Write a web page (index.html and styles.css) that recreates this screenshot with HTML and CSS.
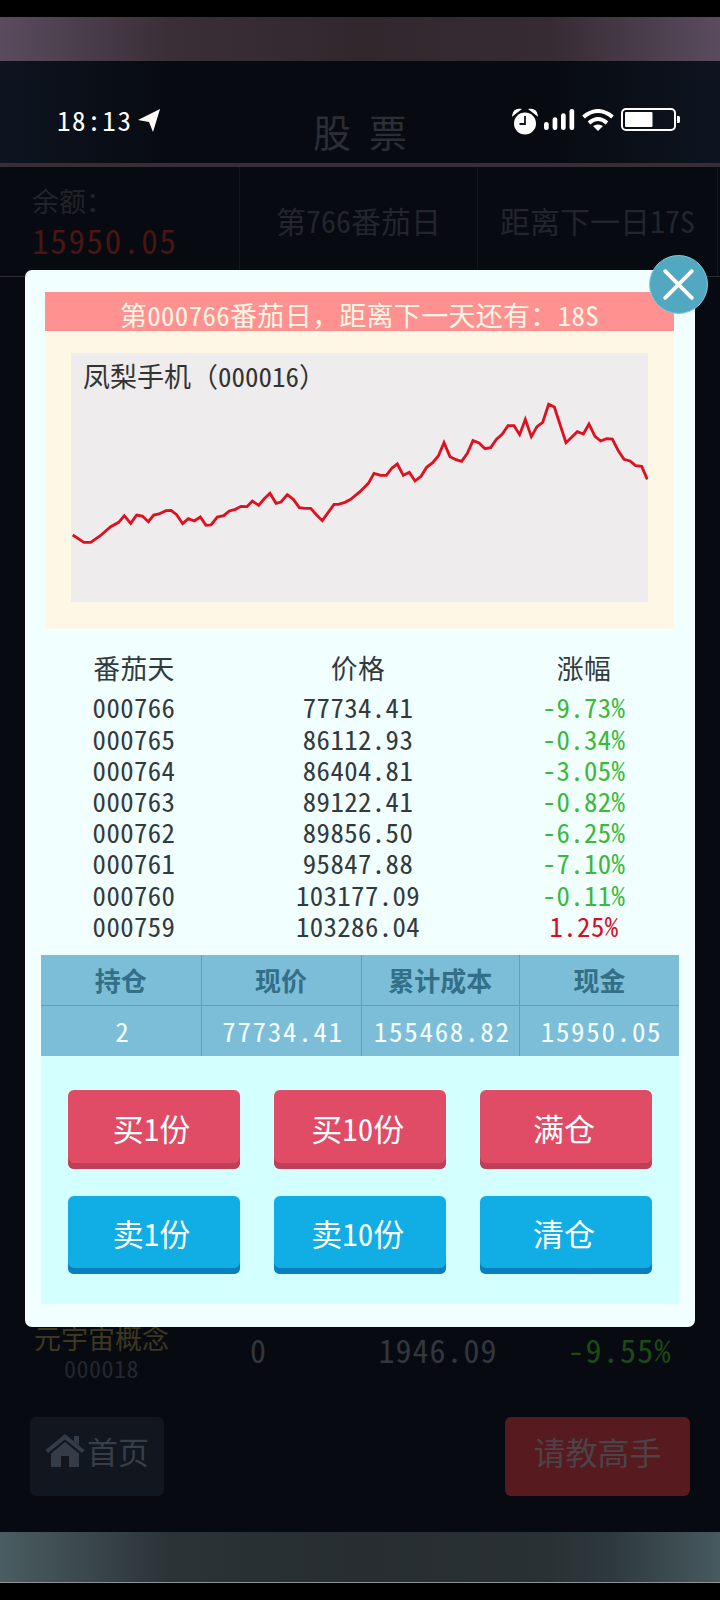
FILE: index.html
```html
<!DOCTYPE html>
<html lang="zh-CN">
<head>
<meta charset="utf-8">
<title>股票</title>
<link rel="stylesheet" href="styles.css">
</head>
<body>
<div class="page">
  <div class="edge-top"></div>
  <div class="band band-top"></div>
  <header class="head"><h1 class="head-title">股 票</h1></header>
  <section class="summary">
    <div class="sum-cell sum-balance">
      <div class="sum-label">余额&#xFF1A;</div>
      <div class="sum-money">15950.05</div>
    </div>
    <div class="sum-cell sum-center">第766番茄日</div>
    <div class="sum-cell sum-center">距离下一日17S</div>
  </section>
  <div class="list-panel">
    <div class="stock-row">
      <div class="stock-name"><div class="stock-title">元宇宙概念</div><div class="stock-code">000018</div></div>
      <div class="stock-held">0</div>
      <div class="stock-price">1946.09</div>
      <div class="stock-change">-9.55%</div>
    </div>
  </div>
  <nav class="foot">
    <div class="foot-btn foot-home">
      <svg class="home-icon" viewBox="0 0 40 33"><path d="M20 0 L39.500 16 L37 19 L20 5.500 L3 19 L.5 16Z M29 2h5v9l-5-4Z M6 19.500 L20 8 L34 19.500 V33 H24 V22 H16 V33 H6Z"/></svg>
      <span>首页</span>
    </div>
    <div class="foot-btn foot-ask">请教高手</div>
  </nav>
  <div class="band band-bottom"></div>
  <div class="edge-bottom"></div>

  <div class="status">
    <div class="status-left">
      <span class="clock">18:13</span>
      <svg class="arrow" viewBox="0 0 24 24"><path d="M23 1 L1 12 L12 14 L16 24Z"/></svg>
    </div>
    <div class="status-right">
      <svg class="alarm" viewBox="0 0 26 28"><circle cx="13" cy="15.500" r="11" fill="#fff"/><path d="M1 7 Q2 1 8 1.500 Z M25 7 Q24 1 18 1.500 Z" fill="#fff" stroke="#fff" stroke-width="1.500"/><path d="M13 8v8H7.500" fill="none" stroke="#10131a" stroke-width="1.800"/></svg>
      <svg class="signal" viewBox="0 0 31 21"><rect x="0" y="13" width="4.700" height="8" rx="2.300"/><rect x="8.600" y="8.300" width="4.700" height="12.700" rx="2.300"/><rect x="17" y="4.300" width="4.700" height="16.700" rx="2.300"/><rect x="25.500" y="0" width="4.700" height="21" rx="2.300"/></svg>
      <svg class="wifi" viewBox="0 0 32 22"><path d="M1.500 8 Q16 -4 30.500 8"/><path d="M7 14 Q16 6 25 14"/><path d="M11 17 Q16 14 21 17 L16 22Z" class="wifi-dot"/></svg>
      <svg class="battery" viewBox="0 0 59 23"><rect x="1" y="1" width="53" height="21" rx="4" class="batt-case"/><rect x="4" y="4" width="27.500" height="15" rx="1" class="batt-fill"/><path d="M56 8h1.500a1.500 1.500 0 0 1 1.500 1.500v4a1.500 1.500 0 0 1-1.500 1.500H56Z" class="batt-fill"/></svg>
    </div>
  </div>

  <div class="modal">
    <button class="close" type="button" aria-label="关闭"><svg viewBox="0 0 60 60"><path d="M16 16 L44 44 M44 16 L16 44"/></svg></button>
    <div class="banner">第000766番茄日&#xFF0C;距离下一天还有&#xFF1A;18S</div>
    <div class="chart-panel">
      <div class="chart">
        <div class="chart-title">凤梨手机&#xFF08;000016&#xFF09;</div>
        <svg class="chart-line" viewBox="71 353 577 249"><g transform="translate(60 380) scale(.33333)"><polyline points="38,465 72,487 92,487 120,468 152,440 176,427 193,407 212,430 230,405 247,408 265,425 281,405 297,402 318,392 333,391 350,404 368,431 385,416 403,423 421,411 438,436 453,435 472,411 491,407 508,393 526,388 543,379 561,380 577,363 596,376 612,357 630,340 648,370 663,366 682,344 700,358 718,383 735,385 752,385 770,405 787,422 822,373 835,373 855,367 872,358 900,335 925,310 942,280 962,286 979,286 996,264 1012,252 1030,286 1048,277 1065,303 1083,289 1100,262 1118,248 1135,228 1152,188 1170,230 1188,239 1205,244 1222,220 1239,182 1257,189 1275,206 1292,203 1309,178 1327,162 1344,137 1362,137 1379,164 1396,118 1414,170 1431,140 1448,127 1466,73 1483,81 1518,188 1535,172 1552,155 1570,162 1587,132 1605,169 1622,183 1640,176 1657,177 1675,212 1692,238 1710,243 1727,257 1745,259 1762,298"/></g></svg>
      </div>
    </div>
    <div class="history">
      <div class="hist-row hist-head"><span>番茄天</span><span>价格</span><span>涨幅</span></div>
      <div class="hist-row"><span>000766</span><span>77734.41</span><span class="down">-9.73%</span></div>
      <div class="hist-row"><span>000765</span><span>86112.93</span><span class="down">-0.34%</span></div>
      <div class="hist-row"><span>000764</span><span>86404.81</span><span class="down">-3.05%</span></div>
      <div class="hist-row"><span>000763</span><span>89122.41</span><span class="down">-0.82%</span></div>
      <div class="hist-row"><span>000762</span><span>89856.50</span><span class="down">-6.25%</span></div>
      <div class="hist-row"><span>000761</span><span>95847.88</span><span class="down">-7.10%</span></div>
      <div class="hist-row"><span>000760</span><span>103177.09</span><span class="down">-0.11%</span></div>
      <div class="hist-row"><span>000759</span><span>103286.04</span><span class="up">1.25%</span></div>
    </div>
    <div class="trade">
      <div class="hold">
        <div class="hold-cell hold-label">持仓</div><div class="hold-cell hold-label">现价</div><div class="hold-cell hold-label">累计成本</div><div class="hold-cell hold-label">现金</div>
        <div class="hold-cell hold-val">2</div><div class="hold-cell hold-val">77734.41</div><div class="hold-cell hold-val">155468.82</div><div class="hold-cell hold-val">15950.05</div>
      </div>
      <div class="actions">
        <div class="act act-buy">买1份</div><div class="act act-buy">买10份</div><div class="act act-buy">满仓</div>
        <div class="act act-sell">卖1份</div><div class="act act-sell">卖10份</div><div class="act act-sell">清仓</div>
      </div>
    </div>
  </div>
</div>
</body>
</html>
```
FILE: styles.css
```css
* { box-sizing: border-box; }
html, body { margin: 0; padding: 0; }
body {
  background: #000;
  font-family: "Noto Sans Mono CJK SC", "Noto Sans CJK SC", "Liberation Mono", monospace;
  font-weight: 300;
}
.page {
  position: relative;
  width: 720px;
  height: 1600px;
  display: flex;
  flex-direction: column;
  background: #070a10;
  overflow: hidden;
}
.edge-top { height: 17px; background: #000; flex: none; }
.edge-bottom { height: 18px; background: #000; border-top: 1px solid #8d9598; flex: none; }
.band { flex: none; }
.band-top {
  height: 44px;
  background: linear-gradient(90deg, #5a4c5e 0, #3a2e37 170px, #31282e 360px, #362b33 550px, #5a4c5e 100%);
}
.band-bottom {
  height: 50px;
  background: linear-gradient(90deg, #4a5d62 0, #2b3337 170px, #272d30 360px, #2a3134 550px, #2d393d 610px, #475a60 100%);
}
.head {
  flex: none;
  height: 106px;
  background: linear-gradient(90deg, #0e1420 0, #070a10 25%, #070a10 75%, #0e1420 100%);
  border-bottom: 4px solid #3a2e36;
  display: flex;
  justify-content: center;
}
.head-title {
  margin: 0;
  padding-top: 47px;
  font-size: 38px;
  line-height: 46px;
  font-weight: 300;
  word-spacing: -1px;
  color: #2b2e34;
}
.summary {
  flex: none;
  height: 110px;
  display: grid;
  grid-template-columns: 240px 238px 240px;
  border-bottom: 1px solid #2c2a33;
}
.sum-cell { border-right: 1px solid #14171d; }
.sum-balance { padding: 17px 0 0 32px; }
.sum-label { font-size: 27px; line-height: 34px; color: #20242a; }
.sum-money { font-size: 33px; line-height: 42px; color: #4a1512; margin-top: 1px; letter-spacing: 1.700px; }
.sum-center {
  display: flex;
  align-items: center;
  justify-content: center;
  font-size: 30px;
  color: #22262c;
  padding-bottom: 4px;
}
.list-panel {
  flex: 1;
  display: flex;
  flex-direction: column;
  justify-content: flex-end;
  padding: 0 0 37px;
}
.stock-row { display: grid; grid-template-columns: 228px 60px 240px 192px; align-items: center; }
.stock-name { text-align: center; padding-right: 25px; }
.stock-title { font-size: 27px; line-height: 37px; color: #3e3820; }
.stock-code { font-size: 24px; line-height: 24px; letter-spacing: .5px; color: #23272d; }
.stock-held { font-size: 32px; color: #33373d; text-align: center; padding-bottom: 2px; }
.stock-price { font-size: 32px; letter-spacing: 1px; color: #33373d; text-align: center; padding: 0 0 2px 60px; white-space: nowrap; }
.stock-change { font-size: 32px; letter-spacing: 1.300px; color: #1d4a15; text-align: center; padding: 0 8px 2px 0; white-space: nowrap; }
.foot {
  flex: none;
  height: 115px;
  display: flex;
  justify-content: space-between;
  align-items: flex-start;
  padding: 0 30px;
}
.foot-btn {
  height: 79px;
  border-radius: 6px;
  display: flex;
  align-items: center;
  justify-content: center;
  font-size: 32px;
  padding-bottom: 12px;
}
.foot-home { width: 134px; background: #11161f; color: #383e47; gap: 2px; font-size: 31px; }
.foot-ask { width: 185px; background: #571a1f; color: #4c4347; }
.home-icon { width: 40px; height: 33px; fill: #343c48; }
.status {
  position: absolute;
  top: 103px;
  left: 57px;
  width: 623px;
  display: flex;
  justify-content: space-between;
  align-items: center;
}
.status-left { display: flex; align-items: center; gap: 4px; }
.clock { font-size: 27px; line-height: 26px; color: #fff; letter-spacing: 1.600px; }
.arrow { width: 24px; height: 24px; fill: #fff; }
.status-right { display: flex; align-items: center; }
.alarm { width: 26px; height: 28px; margin: 5px 6px 0 0; }
.signal { width: 31px; height: 21px; fill: #fff; margin-right: 7px; }
.wifi { width: 32px; height: 22px; margin-right: 7px; fill: none; stroke: #fff; stroke-width: 4px; }
.wifi-dot { fill: #fff; stroke: none; }
.battery { width: 59px; height: 23px; }
.batt-case { fill: none; stroke: #fff; stroke-width: 2px; }
.batt-fill { fill: #fff; }
.modal {
  position: absolute;
  top: 270px;
  left: 25px;
  width: 670px;
  height: 1057px;
  padding-top: 22px;
  background: #f2ffff;
  border-radius: 7px;
}
.close {
  position: absolute;
  top: -15px;
  right: -13px;
  width: 59px;
  height: 59px;
  padding: 0;
  border: 1px solid #7fd0dc;
  border-radius: 50%;
  background: #52a8c0;
}
.close svg { display: block; width: 100%; height: 100%; }
.close path { stroke: #fff; stroke-width: 4px; stroke-linecap: round; fill: none; }
.banner {
  margin: 0 21px 0 20px;
  height: 39px;
  padding-top: 8px;
  background: #ff9290;
  color: #fff5e6;
  font-size: 27px;
  letter-spacing: .3px;
  line-height: 29px;
  text-align: center;
}
.chart-panel {
  margin: 0 21px 0 20px;
  height: 298px;
  padding: 22px 26px 27px 26px;
  background: #fff7e5;
}
.chart { position: relative; height: 249px; background: #eeecec; }
.chart-title {
  position: absolute;
  top: 3px;
  left: 12px;
  font-size: 27px;
  line-height: 40px;
  color: #333;
}
.chart-line { display: block; width: 100%; height: 100%; }
.chart-line polyline { fill: none; stroke: #df1020; stroke-width: 8.500; stroke-linejoin: miter; }
.history { padding-top: 19px; }
.hist-row {
  display: grid;
  grid-template-columns: 218px 230px 222px;
  text-align: center;
  font-size: 26.800px;
  letter-spacing: .4px;
  line-height: 31.200px;
  color: #333a3e;
}
.hist-head { line-height: 40px; margin-bottom: 3.400px; }
.down { color: #3cb83c; }
.up { color: #d40f24; }
.trade { margin: 14px 16px 0 16px; }
.hold { display: grid; grid-template-columns: 160.500px 160px 158.500px 1fr; background: #7cbdd8; }
.hold-cell {
  height: 50.500px;
  display: flex;
  align-items: center;
  justify-content: center;
  border-right: 1px solid #609fb8;
}
.hold-cell:nth-child(4n) { border-right: 0; }
.hold-label { font-size: 26px; font-weight: 700; color: #336f86; border-bottom: 1px solid #609fb8; }
.hold-val { font-size: 27px; letter-spacing: 1.700px; color: #f4ffff; padding-left: 4px; }
.actions {
  height: 248px;
  background: #d4ffff;
  display: grid;
  grid-template-columns: repeat(3, 172px);
  grid-auto-rows: 78.500px;
  justify-content: space-between;
  row-gap: 27px;
  padding: 34px 27px 0 26.500px;
}
.act {
  display: flex;
  align-items: center;
  justify-content: center;
  font-size: 31px;
  color: #fff;
  border-radius: 6px;
  padding: 0 4px 4px 0;
}
.act-buy { background: #e04c65; box-shadow: inset 0 -6px 0 #bf3f56; }
.act-sell { background: #10aee4; box-shadow: inset 0 -6px 0 #0a7fbe; }
```
